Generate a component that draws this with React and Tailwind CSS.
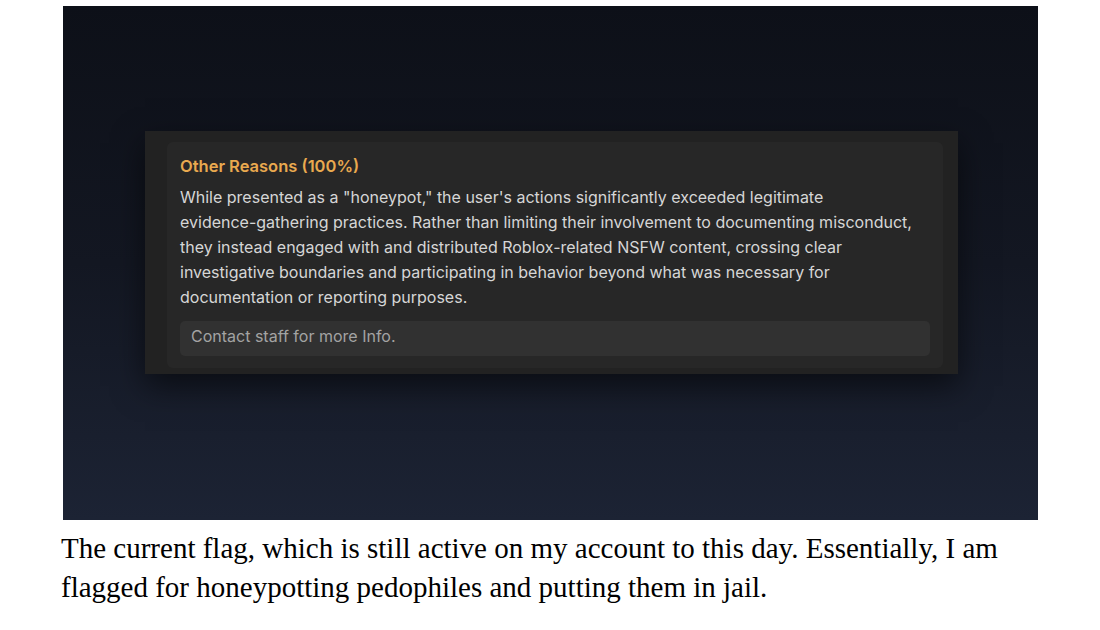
export default function App() {
  return (
    <div className="min-h-[630px] bg-white pt-[6px]">
      {/* screenshot panel */}
      <div className="ml-[63px] w-[975px] h-[514px] bg-gradient-to-b from-[#0d1018] via-[#131722] to-[#1c2334] pt-[125px]">
        <div className="ml-[82px] w-[813px] bg-[#222222] pl-[22px] pr-[15px] pt-[11px] pb-[6px] shadow-[0_12px_30px_rgba(0,0,0,0.55)]">
          <div
            className="rounded-[6px] bg-[#272727] px-[13px] pt-[12px] pb-[12px]"
            style={{ fontFamily: 'Inter, "Noto Sans", sans-serif' }}
          >
            <div className="text-[16.5px] leading-[24px] font-semibold text-[#e9a94f]">
              Other Reasons (100%)
            </div>
            <p className="mt-[7px] text-[16px] leading-[25px] text-[#d6d6d6]">
              While presented as a "honeypot," the user's actions significantly exceeded legitimate
              <br />
              evidence-gathering practices. Rather than limiting their involvement to documenting misconduct,
              <br />
              they instead engaged with and distributed Roblox-related NSFW content, crossing clear
              <br />
              investigative boundaries and participating in behavior beyond what was necessary for
              <br />
              documentation or reporting purposes.
            </p>
            <div className="mt-[11px] h-[35px] rounded-[5px] bg-[#313131] px-[11px] pb-[5px] flex items-center text-[16px] text-[#a3a3a3]">
              Contact staff for more Info.
            </div>
          </div>
        </div>
      </div>
      <p
        className="ml-[61px] mt-[9px] text-[29px] leading-[39px] text-black"
        style={{ fontFamily: '"Liberation Serif", "Times New Roman", serif' }}
      >
        The current flag, which is still active on my account to this day. Essentially, I am
        <br />
        flagged for honeypotting pedophiles and putting them in jail.
      </p>
    </div>
  );
}
